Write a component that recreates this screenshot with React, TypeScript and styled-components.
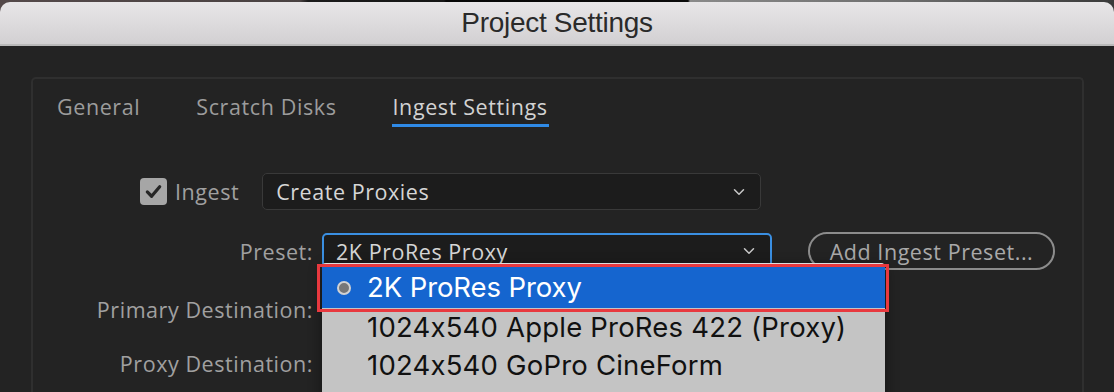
import React from "react";
import styled, { createGlobalStyle } from "styled-components";
import { ChevronDown } from "lucide-react";

const GlobalStyle = createGlobalStyle`
  html, body {
    margin: 0;
    padding: 0;
  }
  body {
    background: #232323;
    font-family: "Open Sans", "DejaVu Sans", sans-serif;
  }
`;

const Page = styled.div`
  width: 1114px;
  height: 392px;
  overflow: hidden;
  background: linear-gradient(
      to right,
      #54494a 0,
      #4a4242 300px,
      #1b1b1b 308px,
      #161616 444px,
      #070707 446px,
      #0b0b0b 688px,
      #8a8a8a 690px,
      #6e6e6e 900px,
      #3a3a3a 1114px
    )
    top / 100% 12px no-repeat,
    #232323;
  padding-top: 2px;
  box-sizing: border-box;
`;

const Window = styled.div`
  display: flex;
  flex-direction: column;
  height: 100%;
`;

const TitleBar = styled.div`
  height: 42px;
  border-radius: 10px 10px 0 0;
  background: linear-gradient(to bottom, #e8e6e8, #d2d0d2);
  border-bottom: 2px solid #b9b9b9;
  display: flex;
  align-items: center;
  justify-content: center;
  font-family: "Liberation Sans", Arial, sans-serif;
  font-size: 28px;
  color: #2a2a2a;
  letter-spacing: -0.3px;
`;

const Body = styled.div`
  flex: 1;
  background: #232323;
  padding: 31px 30px 0 31px;
  display: flex;
`;

const Panel = styled.div`
  flex: 1;
  border: 2px solid #2f2f2f;
  border-bottom: none;
  border-radius: 5px 5px 0 0;
  display: flex;
  flex-direction: column;
`;

const Tabs = styled.div`
  display: flex;
  gap: 54px;
  padding: 13px 0 0 23px;
  height: 38px;
`;

const Tab = styled.div<{ active?: boolean }>`
  font-size: 21.5px;
  font-weight: 500;
  letter-spacing: 0.6px;
  line-height: 30px;
  color: ${({ active }) => (active ? "#d2d2d2" : "#9c9c9c")};
  border-bottom: 3px solid ${({ active }) => (active ? "#2f8ae6" : "transparent")};
  height: 35px;
  box-sizing: border-box;
  padding: 0 1px;
`;

const Form = styled.div`
  display: flex;
  flex-direction: column;
  padding-top: 43px;
`;

const IngestRow = styled.div`
  display: flex;
  align-items: center;
  height: 37px;
  padding-left: 107px;
`;

const Check = styled.div`
  width: 27px;
  height: 27px;
  border-radius: 4px;
  background: #a6a6a6;
  display: flex;
  align-items: center;
  justify-content: center;
`;

const Text = styled.span`
  font-size: 21.5px;
  font-weight: 500;
  letter-spacing: 0.55px;
`;

const CheckLabel = styled(Text)`
  color: #a0a0a0;
  margin: 0 23px 0 8px;
`;

const FieldRow = styled.div<{ top: number }>`
  display: grid;
  grid-template-columns: 280px 450px 247px;
  column-gap: 9px;
  align-items: center;
  height: 37px;
  margin-top: ${({ top }) => top}px;
`;

const Label = styled(Text)`
  color: #a0a0a0;
  text-align: right;
`;

const Select = styled.div<{ focused?: boolean; width?: number }>`
  position: relative;
  box-sizing: border-box;
  height: 37px;
  width: ${({ width }) => (width ? width + "px" : "auto")};
  background: #1c1c1c;
  border: ${({ focused }) => (focused ? "2px solid #3a8fe2" : "1.5px solid #393939")};
  border-radius: 5px;
  display: flex;
  align-items: center;
  justify-content: space-between;
  padding: 0 12px 0 ${({ focused }) => (focused ? "12px" : "13px")};
  color: #d6d6d6;
`;

const AddButton = styled.div`
  box-sizing: border-box;
  margin-left: 27px;
  width: 247px;
  height: 38px;
  border: 2px solid #8c8c8c;
  border-radius: 19px;
  display: flex;
  align-items: center;
  justify-content: center;
  color: #a9a9a9;
`;

const Menu = styled.div`
  position: absolute;
  top: 28px;
  left: -2px;
  width: 563px;
  background: #c4c4c4;
  border-top: 1px solid #dcdcdc;
  border-radius: 4px 4px 0 0;
  padding-top: 3px;
  box-shadow: 0 4px 14px rgba(0, 0, 0, 0.45);
  z-index: 2;
`;

const MenuItem = styled.div<{ selected?: boolean }>`
  position: relative;
  height: ${({ selected }) => (selected ? "41px" : "38px")};
  display: flex;
  align-items: center;
  padding-left: 45px;
  font-family: Inter, "Liberation Sans", sans-serif;
  font-size: 27.5px;
  letter-spacing: ${({ selected }) => (selected ? "-0.1px" : "0.2px")};
  white-space: nowrap;
  color: ${({ selected }) => (selected ? "#ffffff" : "#111111")};
  background: ${({ selected }) => (selected ? "#1565cf" : "transparent")};
`;

const Radio = styled.span`
  position: absolute;
  left: 15px;
  top: 50%;
  width: 10px;
  height: 10px;
  margin-top: -6px;
  border-radius: 50%;
  background: #777;
  border: 2px solid #d2d2d2;
`;

const Highlight = styled.div`
  position: absolute;
  left: -5px;
  right: -4px;
  top: -3px;
  bottom: -4px;
  border: 3px solid #e8393f;
  pointer-events: none;
`;

const CheckIcon = () => (
  <svg width="19" height="19" viewBox="0 0 20 20">
    <path d="M3.5 10.5 L8 15 L16.5 5" fill="none" stroke="#262626" strokeWidth="3.4" strokeLinecap="round" strokeLinejoin="round" />
  </svg>
);

const presets = ["1024x540 Apple ProRes 422 (Proxy)", "1024x540 GoPro CineForm", "1024x540 H.264"];

export default function App() {
  return (
    <Page>
      <GlobalStyle />
      <Window>
        <TitleBar>Project Settings</TitleBar>
        <Body>
          <Panel>
            <Tabs>
              <Tab>General</Tab>
              <Tab>Scratch Disks</Tab>
              <Tab active>Ingest Settings</Tab>
            </Tabs>
            <Form>
              <IngestRow>
                <Check>
                  <CheckIcon />
                </Check>
                <CheckLabel>Ingest</CheckLabel>
                <Select width={499}>
                  <Text>Create Proxies</Text>
                  <ChevronDown size={18} color="#c8c8c8" strokeWidth={2} />
                </Select>
              </IngestRow>
              <FieldRow top={22}>
                <Label>Preset:</Label>
                <Select focused>
                  <Text>2K ProRes Proxy</Text>
                  <ChevronDown size={18} color="#c8c8c8" strokeWidth={2} />
                  <Menu>
                    <MenuItem selected>
                      <Radio />
                      2K ProRes Proxy
                      <Highlight />
                    </MenuItem>
                    {presets.map((p) => (
                      <MenuItem key={p}>{p}</MenuItem>
                    ))}
                  </Menu>
                </Select>
                <AddButton>
                  <Text>Add Ingest Preset...</Text>
                </AddButton>
              </FieldRow>
              <FieldRow top={22}>
                <Label>Primary Destination:</Label>
              </FieldRow>
              <FieldRow top={17}>
                <Label>Proxy Destination:</Label>
              </FieldRow>
            </Form>
          </Panel>
        </Body>
      </Window>
    </Page>
  );
}
